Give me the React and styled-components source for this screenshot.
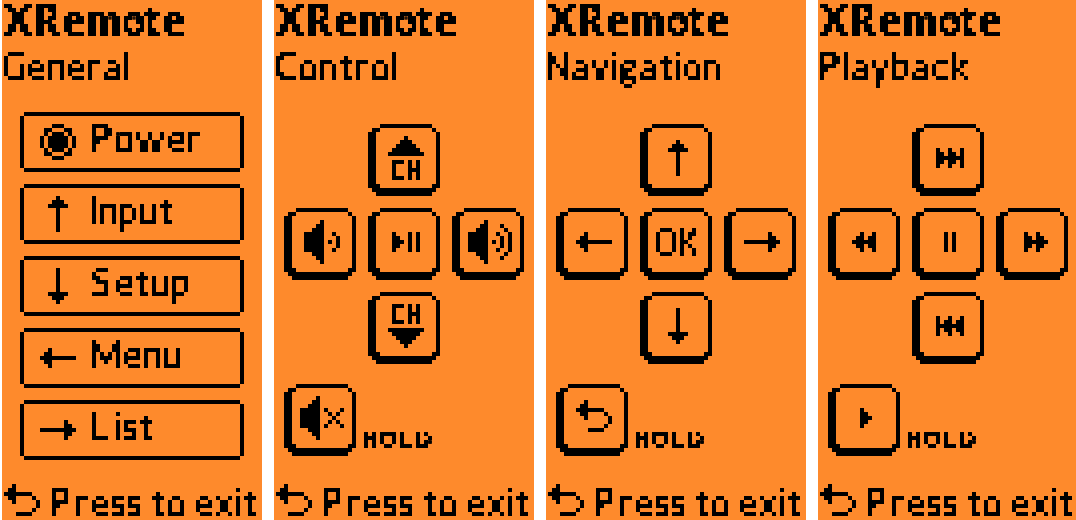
import React from "react";
import styled, { createGlobalStyle } from "styled-components";

const INK = "#000000";
const LCD = "#fe8a2c";
const CELL = 4;

const GlobalStyle = createGlobalStyle`
  html, body { margin: 0; background: #ffffff; overflow: hidden; }
`;

/* ---------- pixel artwork: "#" is a lit cell ---------- */

const mirror = (rows) => rows.map((r) => r.split("").reverse().join(""));
const flip = (rows) => [...rows].reverse();

const up = ["..#..", ".###.", "#####", "..#..", "..#..", "..#..", "..#..", "..#..", "..#.."];
const left = ["..#......", ".##......", "#########", ".##......", "..#......"];
const back = [
  "..#......",
  ".##......",
  "#######..",
  ".##....#.",
  "..#.....#",
  "........#",
  ".......#.",
  "...####..",
];
const triangle = ["....#....", "...###...", "..#####..", ".#######.", "#########"];
const next = ["#..#..#", "##.##.#", "#######", "##.##.#", "#..#..#"];
const forward = [".#..#..", ".##.##.", ".######", ".##.##.", ".#..#.."];

const ART = {
  power: [
    "...###...",
    ".##...##.",
    ".#.###.#.",
    "#.#####.#",
    "#.#####.#",
    "#.#####.#",
    ".#.###.#.",
    ".##...##.",
    "...###...",
  ],
  up,
  down: flip(up),
  left,
  right: mirror(left),
  back,
  backKey: [...back, "........."],
  triangleUp: triangle,
  triangleDown: flip(triangle),
  volumeDown: [
    "....#....",
    "...##....",
    "..###....",
    "#####..#.",
    "#####...#",
    "#####.#.#",
    "#####...#",
    "#####..#.",
    "..###....",
    "...##....",
    "....#....",
  ],
  volumeUp: [
    "....#......",
    "...##...#..",
    "..###....#.",
    "#####..#..#",
    "#####...#.#",
    "#####.#.#.#",
    "#####...#.#",
    "#####..#..#",
    "..###....#.",
    "...##...#..",
    "....#......",
  ],
  mute: [
    "....#......",
    "...##......",
    "..###......",
    "#####.#...#",
    "#####..#.#.",
    "#####...#..",
    "#####..#.#.",
    "#####.#...#",
    "..###......",
    "...##......",
    "....#......",
  ],
  playPause: ["#...#.#", "##..#.#", "###.#.#", "##..#.#", "#...#.#"],
  next,
  previous: mirror(next),
  forward,
  rewind: mirror(forward),
  pause: ["#.#", "#.#", "#.#", "#.#", "#.#"],
  play: ["#..", "##.", "###", "##.", "#.."],
  keyFrame: [
    "...#############..",
    ".##.............#.",
    ...Array(13).fill("##...............#"),
    "###.............##",
    ".################.",
    "..##############..",
  ],
};

const toPath = (rows) =>
  rows
    .flatMap((row, y) =>
      [...row.matchAll(/#+/g)].map((m) => `M${m.index} ${y}h${m[0].length}v1h-${m[0].length}z`)
    )
    .join("");

const Art = styled.svg`
  display: block;
  flex: none;
  fill: ${INK};
  shape-rendering: crispEdges;
`;

const Icon = ({ name, className }) => {
  const rows = ART[name];
  const w = rows[0].length;
  const h = rows.length;
  return (
    <Art className={className} width={w * CELL} height={h * CELL} viewBox={`0 0 ${w} ${h}`}>
      <path d={toPath(rows)} />
    </Art>
  );
};

/* ---------- LCD text: averaged over each 4px cell, then thresholded ---------- */

const FilterDefs = styled.svg`
  position: absolute;
  width: 0;
  height: 0;
`;

const LcdFilter = ({ id, threshold }) => (
  <filter id={id} filterUnits="userSpaceOnUse" x="-8" y="-8" width="280" height="64">
    <feConvolveMatrix
      in="SourceGraphic"
      order="4"
      kernelMatrix="1 1 1 1 1 1 1 1 1 1 1 1 1 1 1 1"
      divisor="16"
      targetX="2"
      targetY="2"
      edgeMode="none"
      preserveAlpha="false"
      result="mean"
    />
    <feFlood x="-6" y="-6" width="1" height="1" floodColor="#000" result="dot" />
    <feComposite in="dot" in2="dot" operator="over" x="-8" y="-8" width="4" height="4" />
    <feTile result="grid" />
    <feComposite in="mean" in2="grid" operator="in" />
    <feComponentTransfer>
      <feFuncA type="linear" slope="200" intercept={-200 * threshold} />
    </feComponentTransfer>
    <feMorphology operator="dilate" radius="1" result="block" />
    <feOffset in="block" dx="-1" dy="0" result="b1" />
    <feOffset in="block" dx="0" dy="-1" result="b2" />
    <feOffset in="block" dx="-1" dy="-1" result="b3" />
    <feMerge>
      <feMergeNode in="block" />
      <feMergeNode in="b1" />
      <feMergeNode in="b2" />
      <feMergeNode in="b3" />
    </feMerge>
  </filter>
);

/* Glyph widths in cells; a glyph is followed by one empty cell unless gap says otherwise. */
const SMALL = { " ": 1, i: 1, l: 1, I: 1, t: 3, r: 3, s: 3, w: 7, M: 7 };
const FACES = {
  body: {
    family: '"Lato", "Liberation Sans", sans-serif',
    weight: 400,
    capRatio: 0.7165,
    cap: 28,
    stroke: 0.5,
    filter: "lcd",
    width: (c) => SMALL[c] || (/[A-Z]/.test(c) ? 5 : 4),
  },
  title: {
    family: '"Lato", "Liberation Sans", sans-serif',
    weight: 900,
    capRatio: 0.7165,
    cap: 32,
    stroke: 0.8,
    filter: "lcd-bold",
    width: (c) => ({ X: 7, R: 6, m: 8, t: 4 }[c] || 5),
    gap: (c) => (c === "o" ? 0 : 1),
  },
  key: {
    family: '"Liberation Sans", sans-serif',
    weight: 400,
    capRatio: 0.688,
    cap: 20,
    stroke: 0.8,
    filter: "lcd",
    width: () => 3,
  },
  tiny: {
    family: '"Liberation Sans", sans-serif',
    weight: 700,
    capRatio: 0.688,
    cap: 16,
    lift: 0.7,
    stroke: 0.3,
    filter: "lcd",
    width: (c) => ({ H: 3, L: 3 }[c] || 4),
  },
};

const TextBox = styled.svg`
  display: block;
  flex: none;
  overflow: visible;
  filter: url(#${(p) => p.$face.filter});
`;

const TextRun = styled.text`
  fill: ${INK};
  stroke: ${INK};
  stroke-width: ${(p) => p.$face.stroke}px;
  font-family: ${(p) => p.$face.family};
  font-weight: ${(p) => p.$face.weight};
  font-size: ${(p) => p.$face.cap / p.$face.capRatio}px;
  text-rendering: geometricPrecision;
  white-space: pre;
`;

const context = document.createElement("canvas").getContext("2d");
const ZOOM = 16;

/* Places each glyph's ink on its cells and finds the stretch for the whole run. */
const layoutRun = (text, face) => {
  context.font = `${face.weight} ${(ZOOM * face.cap) / face.capRatio}px ${face.family}`;
  let cell = 0;
  let inkSum = 0;
  let cellSum = 0;
  const glyphs = [...text].map((c) => {
    const m = context.measureText(c);
    const width = face.width(c);
    const lead = m.actualBoundingBoxLeft / ZOOM;
    const ink = lead + m.actualBoundingBoxRight / ZOOM;
    const glyph = { c, x: cell * CELL, width: width * CELL, ink, lead };
    if (c !== " ") {
      inkSum += ink;
      cellSum += width * CELL;
    }
    cell += width + (face.gap ? face.gap(c) : 1);
    return glyph;
  });
  const k = Math.min(1.15, cellSum / inkSum);
  const xs = glyphs.map((g) => {
    const slack = g.width - g.ink * k;
    const offset = /[A-Zbhkmnpru]/.test(g.c) && slack > 0 ? Math.min(slack / 2, 0.3) : slack / 2;
    return ((g.x + offset) / k + g.lead).toFixed(2);
  });
  return { k, xs: xs.join(" "), width: (cell - 1) * CELL };
};

const LcdText = ({ children, face: faceName = "body" }) => {
  const face = FACES[faceName];
  const { k, xs, width } = layoutRun(children, face);
  return (
    <TextBox $face={face} width={width} height={face.cap}>
      <TextRun $face={face} x={xs} y={face.cap - (face.lift || 0)} transform={`scale(${k} 1)`}>
        {children}
      </TextRun>
    </TextBox>
  );
};

/* ---------- layout ---------- */

const Board = styled.main`
  display: flex;
  gap: 12px;
  width: 1076px;
  height: 520px;
  padding-left: 2px;
  box-sizing: border-box;
  overflow: hidden;
`;

const Screen = styled.section`
  flex: none;
  display: flex;
  flex-direction: column;
  width: 260px;
  height: 520px;
  padding: 4px 0 0 2px;
  box-sizing: border-box;
  background: ${LCD};
`;

const Header = styled.header`
  display: flex;
  flex-direction: column;
  gap: 16px;
`;

const Footer = styled.footer`
  display: flex;
  align-items: flex-end;
  gap: 12px;
  margin-top: auto;
  padding-bottom: 4px;
`;

const MenuList = styled.div`
  display: flex;
  flex-direction: column;
  gap: 12px;
  margin: 32px 0 0 16px;
`;

const bar = `linear-gradient(${INK}, ${INK})`;

const MenuButton = styled.div`
  display: flex;
  gap: 16px;
  width: 224px;
  height: 60px;
  padding: 12px 20px;
  box-sizing: border-box;
  background:
    ${bar} center top / calc(100% - 8px) 4px no-repeat,
    ${bar} center bottom / calc(100% - 8px) 4px no-repeat,
    ${bar} left center / 4px calc(100% - 8px) no-repeat,
    ${bar} right center / 4px calc(100% - 8px) no-repeat;
`;

const IconSlot = styled.div`
  display: flex;
  align-items: center;
  justify-content: center;
  width: 36px;
  height: 36px;
`;

const Pad = styled.div`
  display: grid;
  grid-template-columns: repeat(3, 72px);
  grid-template-areas: ". up ." "left mid right" ". down .";
  gap: 12px;
  margin: 44px 0 0 8px;
`;

const HoldRow = styled.div`
  display: flex;
  align-items: flex-end;
  gap: 8px;
  margin: 20px 0 0 8px;
`;

const HoldLabel = styled.div`
  padding-bottom: 8px;
`;

const Key = styled.div`
  position: relative;
  grid-area: ${(p) => p.$area || "auto"};
  display: flex;
  flex-direction: column;
  align-items: center;
  justify-content: center;
  gap: 4px;
  width: 72px;
  height: 72px;
  padding: 0 0 4px 4px;
  box-sizing: border-box;
`;

const KeyFrame = styled(Icon)`
  position: absolute;
  inset: 0;
`;

const KeyButton = ({ area, icon, children }) => (
  <Key $area={area}>
    <KeyFrame name="keyFrame" />
    {children || <Icon name={icon} />}
  </Key>
);

const RemoteScreen = ({ title, children }) => (
  <Screen>
    <Header>
      <LcdText face="title">XRemote</LcdText>
      <LcdText>{title}</LcdText>
    </Header>
    {children}
    <Footer>
      <Icon name="back" />
      <LcdText>Press to exit</LcdText>
    </Footer>
  </Screen>
);

const Hold = ({ icon }) => (
  <HoldRow>
    <KeyButton icon={icon} />
    <HoldLabel>
      <LcdText face="tiny">HOLD</LcdText>
    </HoldLabel>
  </HoldRow>
);

const MENU = [
  { icon: "power", label: "Power" },
  { icon: "up", label: "Input" },
  { icon: "down", label: "Setup" },
  { icon: "left", label: "Menu" },
  { icon: "right", label: "List" },
];

export default function App() {
  return (
    <>
      <GlobalStyle />
      <FilterDefs aria-hidden="true">
        <defs>
          <LcdFilter id="lcd" threshold={0.42} />
          <LcdFilter id="lcd-bold" threshold={0.5} />
        </defs>
      </FilterDefs>
      <Board>
        <RemoteScreen title="General">
          <MenuList>
            {MENU.map((item) => (
              <MenuButton key={item.label}>
                <IconSlot>
                  <Icon name={item.icon} />
                </IconSlot>
                <LcdText>{item.label}</LcdText>
              </MenuButton>
            ))}
          </MenuList>
        </RemoteScreen>

        <RemoteScreen title="Control">
          <Pad>
            <KeyButton area="up">
              <Icon name="triangleUp" />
              <LcdText face="key">CH</LcdText>
            </KeyButton>
            <KeyButton area="left" icon="volumeDown" />
            <KeyButton area="mid" icon="playPause" />
            <KeyButton area="right" icon="volumeUp" />
            <KeyButton area="down">
              <LcdText face="key">CH</LcdText>
              <Icon name="triangleDown" />
            </KeyButton>
          </Pad>
          <Hold icon="mute" />
        </RemoteScreen>

        <RemoteScreen title="Navigation">
          <Pad>
            <KeyButton area="up" icon="up" />
            <KeyButton area="left" icon="left" />
            <KeyButton area="mid">
              <LcdText>OK</LcdText>
            </KeyButton>
            <KeyButton area="right" icon="right" />
            <KeyButton area="down" icon="down" />
          </Pad>
          <Hold icon="backKey" />
        </RemoteScreen>

        <RemoteScreen title="Playback">
          <Pad>
            <KeyButton area="up" icon="next" />
            <KeyButton area="left" icon="rewind" />
            <KeyButton area="mid" icon="pause" />
            <KeyButton area="right" icon="forward" />
            <KeyButton area="down" icon="previous" />
          </Pad>
          <Hold icon="play" />
        </RemoteScreen>
      </Board>
    </>
  );
}
